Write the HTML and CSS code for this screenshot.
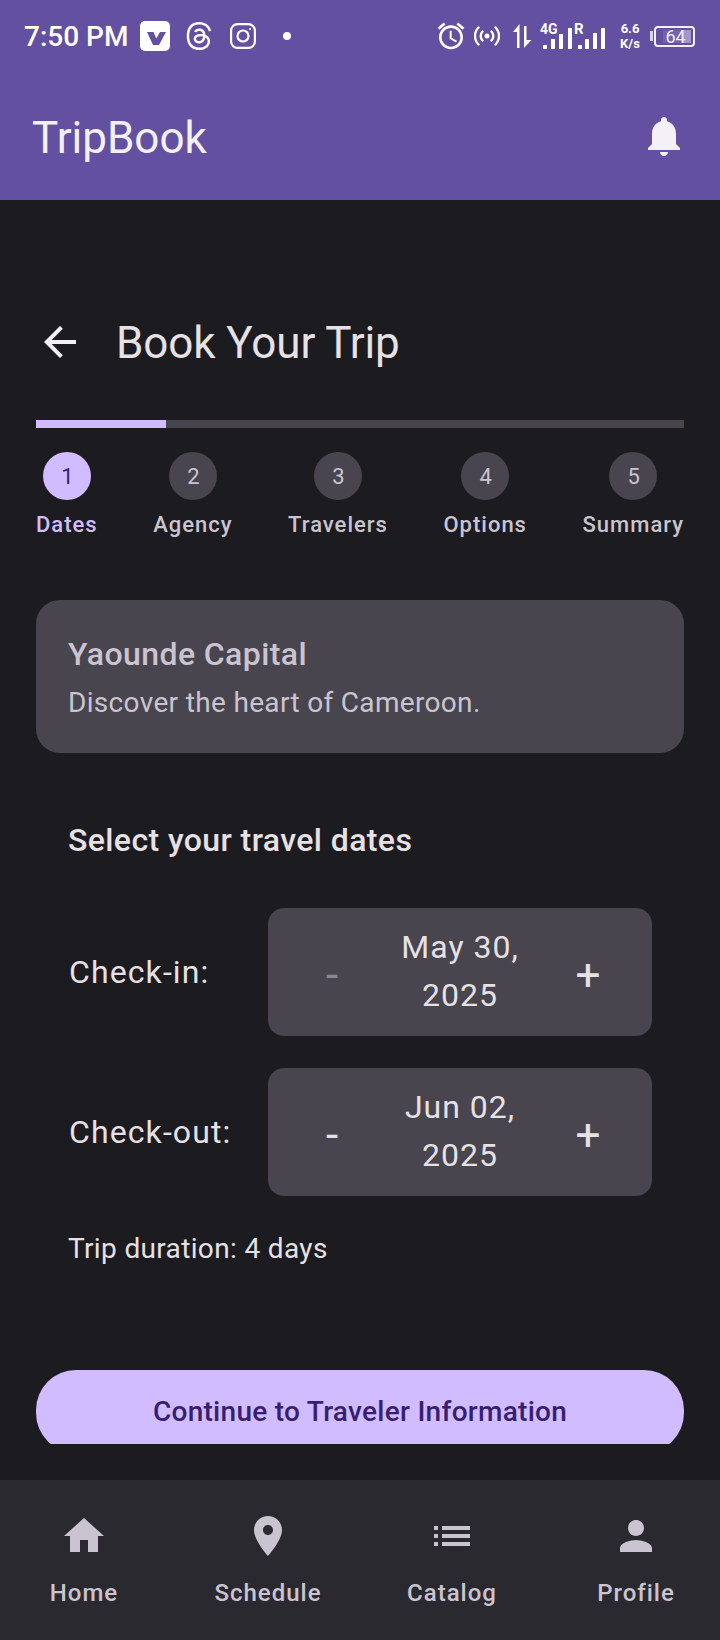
FILE: index.html
```
<!DOCTYPE html>
<html>
	<head>
		<meta charset="UTF-8">
		<title>TripBook</title>
		<link rel="stylesheet" href="styles.css">
	</head>
	<body>
		<header class="top">
			<div class="status">
				<div class="status-left">
					<span class="time">7:50 PM</span>
					<svg class="ico-v" viewBox="0 0 30 30"><rect width="30" height="30" rx="5" fill="#fff"/><path d="M7 11h6.500l2.800 6.500L20 11h6l-7 13h-6z" fill="#6450a1"/></svg>
					<svg class="ico-threads" viewBox="0 0 24 24"><path fill="#fff" d="M12.186 24h-.007c-3.581-.024-6.334-1.205-8.184-3.509C2.35 18.44 1.5 15.586 1.472 12.01v-.017c.03-3.579.879-6.43 2.525-8.482C5.845 1.205 8.6.024 12.18 0h.014c2.746.02 5.043.725 6.826 2.098 1.677 1.29 2.858 3.13 3.509 5.467l-2.04.569c-1.104-3.96-3.898-5.984-8.304-6.015-2.91.022-5.11.936-6.54 2.717C4.307 6.504 3.616 8.914 3.589 12c.027 3.086.718 5.496 2.057 7.164 1.43 1.783 3.631 2.698 6.54 2.717 2.623-.02 4.358-.631 5.8-2.045 1.647-1.613 1.618-3.593 1.09-4.798-.31-.71-.873-1.3-1.634-1.75-.192 1.352-.622 2.446-1.284 3.272-.886 1.102-2.14 1.704-3.73 1.79-1.202.065-2.361-.218-3.259-.801-1.063-.689-1.685-1.74-1.752-2.964-.065-1.19.408-2.285 1.33-3.082.88-.76 2.119-1.207 3.583-1.291a13.853 13.853 0 0 1 3.02.142c-.126-.742-.375-1.332-.75-1.757-.513-.586-1.308-.883-2.359-.89h-.029c-.844 0-1.992.232-2.721 1.32L7.734 7.847c.98-1.454 2.568-2.256 4.478-2.256h.044c3.194.02 5.097 1.975 5.287 5.388.108.046.216.094.321.142 1.49.7 2.58 1.761 3.154 3.07.797 1.82.871 4.79-1.548 7.158-1.85 1.81-4.094 2.628-7.277 2.65Zm1.003-11.69c-.242 0-.487.007-.739.021-1.836.103-2.98.946-2.916 2.143.067 1.256 1.452 1.839 2.784 1.767 1.224-.065 2.818-.543 3.086-3.71a10.5 10.5 0 0 0-2.215-.221z"/></svg>
					<svg class="ico-insta" viewBox="0 0 26 26" fill="none" stroke="#fff" stroke-width="2.200"><rect x="1.100" y="1.100" width="23.800" height="23.800" rx="6.500"/><circle cx="13" cy="13" r="5.500"/><circle cx="20" cy="6" r="1" fill="#fff" stroke="none"/></svg>
					<span class="dot"></span>
				</div>
				<div class="status-right">
					<svg class="ico-alarm" viewBox="0 0 24 24"><path fill="#fff" d="M22 5.720l-4.600-3.860-1.290 1.530 4.600 3.860L22 5.720zM7.880 3.390L6.600 1.860 2 5.710l1.290 1.530 4.590-3.850zM12.500 8H11v6l4.750 2.850.75-1.230-4-2.370V8zM12 4c-4.970 0-9 4.030-9 9s4.020 9 9 9c4.970 0 9-4.030 9-9s-4.030-9-9-9zm0 16c-3.870 0-7-3.130-7-7s3.130-7 7-7 7 3.130 7 7-3.130 7-7 7z"/></svg>
					<svg class="ico-hotspot" viewBox="0 0 26 20" fill="none" stroke="#fff" stroke-width="2.400" stroke-linecap="round"><circle cx="13" cy="10" r="2.500" fill="#fff" stroke="none"/><path d="M8.500 5.500a6.500 6.500 0 0 0 0 9M17.500 5.500a6.500 6.500 0 0 1 0 9M4.500 1.500a12 12 0 0 0 0 17M21.500 1.500a12 12 0 0 1 0 17"/></svg>
					<svg class="ico-arrows" viewBox="0 0 19 24" fill="#fff"><path d="M6.500 0v24H4V8H0z"/><path d="M11 2h2.500v14h5L11 24z"/></svg>
					<svg class="ico-signal" viewBox="0 0 65 28">
						<text x="0" y="12" class="net">4G</text>
						<rect x="3" y="23" width="4" height="4" fill="#fff"/><rect x="11" y="17" width="4" height="10" fill="#fff"/><rect x="19" y="12" width="4" height="15" fill="#fff"/><rect x="28" y="6" width="4" height="21" fill="#fff"/>
						<text x="34" y="12" class="net net-r">R</text>
						<rect x="38" y="23" width="4" height="4" fill="#fff"/><rect x="45" y="17" width="4" height="10" fill="#fff"/><rect x="53" y="11" width="4" height="16" fill="#fff"/><rect x="61" y="6" width="4" height="21" fill="#fff"/>
					</svg>
					<div class="speed"><span>6.6</span><span>K/s</span></div>
					<div class="battery"><span class="nub"></span><div class="cell"><span class="fill"></span><span class="level">64</span></div></div>
				</div>
			</div>
			<div class="appbar">
				<h1>TripBook</h1>
				<svg class="ico48" viewBox="0 0 24 24"><path fill="#f3f1f6" d="M12 22c1.100 0 2-.9 2-2h-4c0 1.100.89 2 2 2zm6-6v-5c0-3.070-1.640-5.640-4.500-6.320V4c0-.83-.67-1.500-1.500-1.500s-1.500.67-1.500 1.500v.68C7.630 5.360 6 7.920 6 11v5l-2 2v1h16v-1l-2-2z"/></svg>
			</div>
		</header>

		<main class="content">
			<div class="heading">
				<svg class="ico48" viewBox="0 0 24 24"><path fill="#f3f1f6" d="M20 11H7.830l5.590-5.590L12 4l-8 8 8 8 1.410-1.410L7.830 13H20v-2z"/></svg>
				<h2>Book Your Trip</h2>
			</div>

			<div class="progress"><div class="progress-on"></div></div>

			<ul class="steps">
				<li class="step step-on"><span class="num">1</span><span class="name">Dates</span></li>
				<li class="step"><span class="num">2</span><span class="name">Agency</span></li>
				<li class="step"><span class="num">3</span><span class="name">Travelers</span></li>
				<li class="step"><span class="num">4</span><span class="name">Options</span></li>
				<li class="step"><span class="num">5</span><span class="name">Summary</span></li>
			</ul>

			<section class="card">
				<h3>Yaounde Capital</h3>
				<p>Discover the heart of Cameroon.</p>
			</section>

			<section class="dates">
				<h3>Select your travel dates</h3>
				<div class="date-row">
					<span class="date-label">Check-in:</span>
					<div class="picker">
						<span class="pick-btn pick-off">-</span>
						<span class="pick-val">May 30, 2025</span>
						<span class="pick-btn">+</span>
					</div>
				</div>
				<div class="date-row">
					<span class="date-label">Check-out:</span>
					<div class="picker">
						<span class="pick-btn">-</span>
						<span class="pick-val">Jun 02, 2025</span>
						<span class="pick-btn">+</span>
					</div>
				</div>
				<p class="duration">Trip duration: 4 days</p>
			</section>

			<div class="cta-clip"><div class="cta">Continue to Traveler Information</div></div>
		</main>

		<nav class="bottom">
			<a class="tab"><svg class="ico48" viewBox="0 0 24 24"><path d="M10 20v-6h4v6h5v-8h3L12 3 2 12h3v8z"/></svg><span>Home</span></a>
			<a class="tab"><svg class="ico48" viewBox="0 0 24 24"><path d="M12 2C8.130 2 5 5.130 5 9c0 5.250 7 13 7 13s7-7.750 7-13c0-3.870-3.130-7-7-7zm0 9.500c-1.380 0-2.500-1.120-2.500-2.500s1.120-2.500 2.500-2.500 2.500 1.120 2.500 2.500-1.120 2.500-2.500 2.500z"/></svg><span>Schedule</span></a>
			<a class="tab"><svg class="ico48" viewBox="0 0 24 24"><path d="M3 13h2v-2H3v2zm0 4h2v-2H3v2zm0-8h2V7H3v2zm4 4h14v-2H7v2zm0 4h14v-2H7v2zM7 7v2h14V7H7z"/></svg><span>Catalog</span></a>
			<a class="tab"><svg class="ico48" viewBox="0 0 24 24"><path d="M12 12c2.210 0 4-1.790 4-4s-1.790-4-4-4-4 1.790-4 4 1.790 4 4 4zm0 2c-2.670 0-8 1.340-8 4v2h16v-2c0-2.660-5.330-4-8-4z"/></svg><span>Profile</span></a>
		</nav>
	</body>
</html>
```

FILE: styles.css
```
*{
	margin: 0;
	padding: 0;
	box-sizing: border-box;
}

body{
	width: 720px;
	height: 1640px;
	display: flex;
	flex-direction: column;
	overflow: hidden;
	background-color: #1c1b1f;
	color: #e6e1e5;
	font-family: Roboto, "Noto Sans", sans-serif;
}

/* 顶部 */
.top{
	height: 200px;
	flex: none;
	background-color: #6450a1;
	color: #f3f1f6;
}

.status{
	height: 72px;
	padding: 0 25px 0 24px;
	display: flex;
	align-items: center;
	justify-content: space-between;
	color: #fff;
}

.status-left,
.status-right{
	display: flex;
	align-items: center;
}

.time{
	font-size: 28px;
	font-weight: 500;
	width: 116px;
	white-space: nowrap;
}

.ico-v{
	width: 30px;
	height: 30px;
}

.ico-threads{
	width: 28px;
	height: 28px;
	margin-left: 15px;
}

.ico-insta{
	width: 26px;
	height: 26px;
	margin-left: 17px;
}

.dot{
	width: 8px;
	height: 8px;
	border-radius: 50%;
	background-color: #fff;
	margin-left: 27px;
}

.ico-alarm{
	width: 32px;
	height: 32px;
}

.ico-hotspot{
	width: 26px;
	height: 20px;
	margin-left: 7px;
}

.ico-arrows{
	width: 19px;
	height: 24px;
	margin-left: 13px;
}

.ico-signal{
	width: 65px;
	height: 28px;
	margin-left: 8px;
	margin-top: -1px;
	overflow: visible;
}

.net{
	font-family: Roboto, sans-serif;
	font-size: 14px;
	font-weight: 700;
	fill: #fff;
}

.net-r{
	font-size: 15px;
}

.speed{
	width: 22px;
	margin-left: 14px;
	display: flex;
	flex-direction: column;
	align-items: center;
	font-size: 13px;
	font-weight: 700;
	line-height: 15px;
}

.battery{
	display: flex;
	align-items: center;
	margin-left: 9px;
}

.nub{
	width: 3px;
	height: 10px;
	background-color: #d9d3ea;
	margin-right: 1px;
}

.cell{
	width: 41px;
	height: 21px;
	border: 2px solid #f3f1f6;
	border-radius: 4px;
	position: relative;
	display: flex;
	align-items: center;
	justify-content: center;
	font-size: 18px;
	padding-left: 2px;
	color: #eeeaf6;
}

.fill{
	position: absolute;
	top: 2px;
	bottom: 2px;
	left: 7px;
	right: 2px;
	background: linear-gradient(to right, rgba(255,255,255,0.1) 65%, rgba(255,255,255,0.4) 65%);
}

.level{
	position: relative;
}

.appbar{
	height: 128px;
	padding: 0 32px;
	display: flex;
	align-items: center;
	justify-content: space-between;
}

.appbar h1{
	padding-top: 4px;
	font-size: 44px;
	font-weight: 400;
}

.ico48{
	width: 48px;
	height: 48px;
	flex: none;
	display: block;
}

/* 内容 */
.content{
	flex: 1;
	padding: 116px 36px 0;
	overflow: hidden;
}

.heading{
	display: flex;
	align-items: center;
	gap: 32px;
}

.heading h2{
	padding-top: 3px;
	font-size: 44px;
	font-weight: 400;
	line-height: 48px;
	letter-spacing: -0.1px;
}

.progress{
	height: 8px;
	margin-top: 53px;
	background-color: #49454f;
}

.progress-on{
	width: 20%;
	height: 8px;
	background-color: #d0bcff;
}

.steps{
	list-style: none;
	display: flex;
	justify-content: space-between;
	margin-top: 24px;
}

.step{
	display: flex;
	flex-direction: column;
	align-items: center;
	gap: 8px;
	color: #cac4d0;
}

.num{
	width: 48px;
	height: 48px;
	border-radius: 50%;
	background-color: #49454f;
	display: flex;
	align-items: center;
	justify-content: center;
	font-size: 22px;
	padding-left: 1px;
}

.name{
	font-size: 22px;
	font-weight: 480;
	line-height: 34px;
	letter-spacing: 1px;
}

.step-on .num{
	background-color: #d0bcff;
	color: #381e72;
}

.step-on .name{
	color: #d0bcff;
}

.card{
	height: 153px;
	margin-top: 58px;
	padding: 32px;
	border-radius: 24px;
	background-color: #49454f;
	color: #cac4d0;
}

.card h3{
	font-size: 32px;
	font-weight: 500;
	line-height: 44px;
	letter-spacing: 0.4px;
}

.card p{
	margin-top: 5px;
	font-size: 28px;
	line-height: 44px;
	letter-spacing: 0.33px;
}

.dates{
	padding: 0 32px;
}

.dates h3{
	margin-top: 63px;
	font-size: 32px;
	font-weight: 500;
	line-height: 48px;
	letter-spacing: 0.4px;
}

.date-row{
	display: flex;
	align-items: center;
	margin-top: 44px;
}

.date-row + .date-row{
	margin-top: 32px;
}

.date-label{
	width: 200px;
	flex: none;
	padding-left: 1px;
	font-size: 32px;
	letter-spacing: 1.1px;
}

.picker{
	width: 384px;
	height: 128px;
	padding: 0 40px;
	border-radius: 16px;
	background-color: #49454f;
	display: grid;
	grid-template-columns: 48px 1fr 48px;
	align-items: center;
}

.pick-btn{
	padding-top: 6px;
	font-size: 44px;
	font-weight: 400;
	line-height: 48px;
	text-align: center;
}

.pick-off{
	color: #8a8790;
}

.pick-val{
	padding: 0 16px 2px;
	font-size: 32px;
	line-height: 48px;
	letter-spacing: 1px;
	text-align: center;
}

.duration{
	margin-top: 31px;
	font-size: 28px;
	line-height: 44px;
	letter-spacing: 0.35px;
}

.cta-clip{
	height: 74px;
	margin-top: 99px;
	overflow: hidden;
}

.cta{
	height: 83px;
	border-radius: 40px;
	background-color: #d0bcff;
	color: #381e72;
	display: flex;
	align-items: center;
	justify-content: center;
	font-size: 28px;
	font-weight: 480;
	letter-spacing: 0.28px;
}

/* 底部导航 */
.bottom{
	height: 160px;
	flex: none;
	padding: 32px 4px 0;
	background-color: #2b2930;
	display: flex;
	gap: 24px;
}

.tab{
	flex: 1;
	display: flex;
	flex-direction: column;
	align-items: center;
	gap: 16px;
	color: #cac4d0;
	fill: #cac4d0;
	font-size: 24px;
	font-weight: 480;
	line-height: 34px;
	letter-spacing: 1px;
}
```
